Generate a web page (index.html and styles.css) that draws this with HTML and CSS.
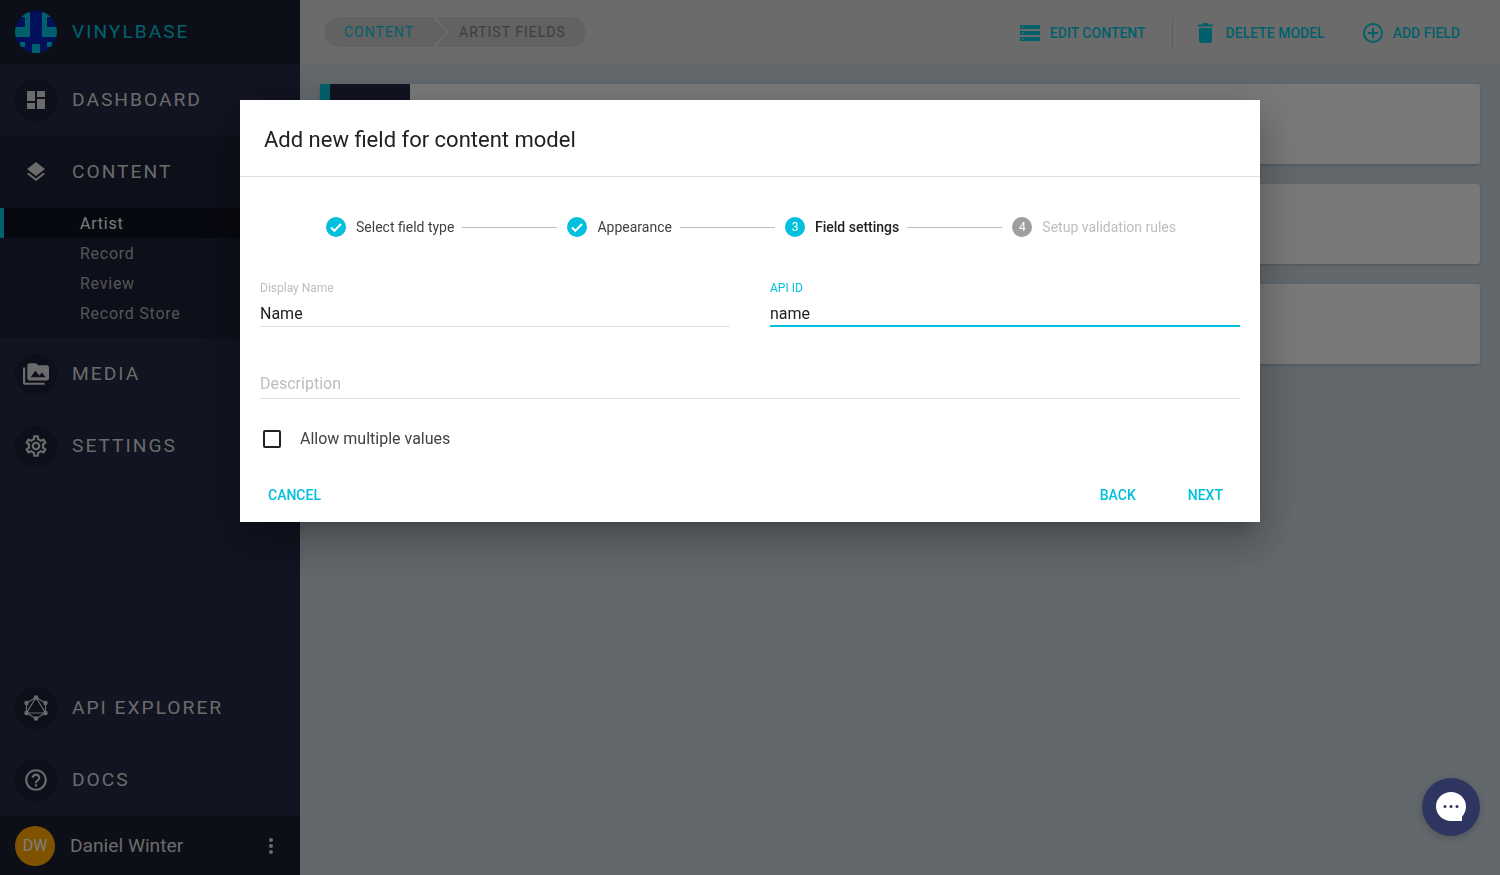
FILE: index.html
```html
<!DOCTYPE html>
<html lang="en">
<head>
    <meta charset="UTF-8">
    <title>Vinylbase - Artist fields</title>
    <link rel="stylesheet" href="styles.css">
</head>
<body>
    <div class="app">
        <!-- Sidebar -->
        <aside class="sidebar">
            <div class="brand">
                <svg class="logo" viewBox="0 0 42 42">
                    <clipPath id="logo-clip"><circle cx="21" cy="21" r="21"/></clipPath>
                    <g clip-path="url(#logo-clip)">
                        <rect width="42" height="42" fill="#0622b8"/>
                        <path fill="#00c3d9" fill-rule="evenodd" d="M0 0h15v26H0zM0 6v10h10V6zM27 0h15v26H27zM32 6v10h10V6zM17 33h8v9h-8zM5 31h5v5H5zM32 31h5v5h-5z"/>
                    </g>
                </svg>
                <span class="brand-name">VINYLBASE</span>
            </div>

            <a class="nav-item">
                <span class="nav-icon">
                    <svg viewBox="0 0 24 24" width="24" height="24"><path d="M3 13h8V3H3zm0 8h8v-6H3zm10 0h8V11h-8zm0-18v6h8V3z"/></svg>
                </span>
                DASHBOARD
            </a>

            <div class="nav-group">
                <a class="nav-item">
                    <span class="nav-icon">
                        <svg viewBox="0 0 24 24" width="24" height="24"><path d="M11.99 18.54l-7.37-5.73L3 14.07l9 7 9-7-1.63-1.27zM12 16l7.36-5.73L21 9l-9-7-9 7 1.63 1.27z"/></svg>
                    </span>
                    CONTENT
                </a>
                <ul class="sub-nav">
                    <li class="sub-item active">Artist</li>
                    <li class="sub-item">Record</li>
                    <li class="sub-item">Review</li>
                    <li class="sub-item">Record Store</li>
                </ul>
            </div>

            <a class="nav-item">
                <span class="nav-icon">
                    <svg viewBox="0 0 24 24" width="26" height="26"><path d="M2 6H0v14c0 1.1.9 2 2 2h18v-2H2zm20-2h-8l-2-2H6c-1.1 0-2 .9-2 2v12c0 1.1.9 2 2 2h16c1.1 0 2-.9 2-2V6c0-1.1-.9-2-2-2zM7 15l4.500-6 3.500 4.510 2.500-3.010L21 15z"/></svg>
                </span>
                MEDIA
            </a>
            <a class="nav-item">
                <span class="nav-icon">
                    <svg viewBox="0 0 24 24" width="26" height="26"><path d="M19.430 12.980c.04-.32.07-.64.07-.98s-.03-.66-.07-.98l2.110-1.650c.19-.15.24-.42.12-.64l-2-3.460c-.12-.22-.39-.3-.61-.22l-2.490 1c-.52-.4-1.080-.73-1.690-.98l-.38-2.650A.488.488 0 0 0 14 2h-4c-.25 0-.46.18-.49.42l-.38 2.650c-.61.25-1.170.59-1.690.98l-2.490-1c-.23-.09-.49 0-.61.22l-2 3.460c-.13.22-.07.49.12.64l2.110 1.650c-.04.32-.07.65-.07.98s.03.66.07.98l-2.110 1.650c-.19.15-.24.42-.12.64l2 3.460c.12.22.39.3.61.22l2.490-1c.52.4 1.080.73 1.690.98l.38 2.650c.03.24.24.42.49.42h4c.25 0 .46-.18.49-.42l.38-2.650c.61-.25 1.170-.59 1.690-.98l2.490 1c.23.09.49 0 .61-.22l2-3.460c.12-.22.07-.49-.12-.64zM17.450 11.270c.04.31.05.52.05.73s-.02.43-.05.73l-.14 1.130.89.7 1.080.84-.7 1.210-1.270-.51-1.040-.42-.9.68c-.43.32-.84.56-1.250.73l-1.060.43-.16 1.130-.2 1.350h-1.400l-.19-1.350-.16-1.130-1.060-.43c-.43-.18-.83-.41-1.230-.71l-.91-.7-1.060.43-1.270.51-.7-1.210 1.080-.84.89-.7-.14-1.130c-.03-.31-.05-.54-.05-.74s.02-.43.05-.73l.14-1.130-.89-.7-1.080-.84.7-1.210 1.270.51 1.040.42.9-.68c.43-.32.84-.56 1.250-.73l1.060-.43.16-1.130.2-1.350h1.390l.19 1.350.16 1.130 1.060.43c.43.18.83.41 1.230.71l.91.7 1.060-.43 1.270-.51.7 1.210-1.070.85-.89.7zM12 8c-2.210 0-4 1.790-4 4s1.790 4 4 4 4-1.790 4-4-1.790-4-4-4zm0 6c-1.100 0-2-.9-2-2s.9-2 2-2 2 .9 2 2-.9 2-2 2z"/></svg>
                </span>
                SETTINGS
            </a>

            <div class="nav-spacer"></div>

            <a class="nav-item">
                <span class="nav-icon">
                    <svg viewBox="0 0 26 26" width="26" height="26">
                        <path class="graph-line" d="M13 2.500 22.500 8v10L13 23.500 3.500 18V8zM13 2.500 22.500 18h-19z"/>
                        <circle cx="13" cy="2.500" r="2.200"/><circle cx="22.500" cy="8" r="2.200"/><circle cx="22.500" cy="18" r="2.200"/>
                        <circle cx="13" cy="23.500" r="2.200"/><circle cx="3.500" cy="18" r="2.200"/><circle cx="3.500" cy="8" r="2.200"/>
                    </svg>
                </span>
                API EXPLORER
            </a>
            <a class="nav-item">
                <span class="nav-icon">
                    <svg viewBox="0 0 24 24" width="26" height="26"><path d="M11 18h2v-2h-2zm1-16C6.480 2 2 6.480 2 12s4.480 10 10 10 10-4.480 10-10S17.520 2 12 2zm0 18c-4.410 0-8-3.590-8-8s3.590-8 8-8 8 3.590 8 8-3.590 8-8 8zm0-14c-2.210 0-4 1.790-4 4h2c0-1.100.9-2 2-2s2 .9 2 2c0 2-3 1.750-3 5h2c0-2.250 3-2.500 3-5 0-2.210-1.790-4-4-4z"/></svg>
                </span>
                DOCS
            </a>

            <div class="user-row">
                <span class="avatar">DW</span>
                <span class="user-name">Daniel Winter</span>
                <svg class="user-menu" viewBox="0 0 24 24" width="24" height="24"><path d="M12 8c1.100 0 2-.9 2-2s-.9-2-2-2-2 .9-2 2 .9 2 2 2zm0 2c-1.100 0-2 .9-2 2s.9 2 2 2 2-.9 2-2-.9-2-2-2zm0 6c-1.100 0-2 .9-2 2s.9 2 2 2 2-.9 2-2-.9-2-2-2z"/></svg>
            </div>
        </aside>

        <!-- Main content behind the dialog -->
        <main class="main">
            <header class="topbar">
                <div class="crumbs">
                    <span class="crumb crumb-first">CONTENT</span>
                    <svg class="crumb-sep" viewBox="0 0 20 30" width="20" height="30"><path d="M0 0l14 15L0 30" /></svg>
                    <span class="crumb">ARTIST FIELDS</span>
                </div>
                <div class="actions">
                    <a class="action">
                        <svg viewBox="0 0 20 16" width="20" height="16"><path d="M0 0h20v4H0zm0 6h20v4H0zm0 6h20v4H0zM2 1.300v1.400h1.400V1.300zm0 6v1.400h1.400V7.300zm0 6v1.400h1.400v-1.400z" fill-rule="evenodd"/></svg>
                        EDIT CONTENT
                    </a>
                    <span class="action-divider"></span>
                    <a class="action action-delete">
                        <svg viewBox="0 0 15 20" width="15" height="20"><path d="M1 5h13v13c0 1.100-.9 2-2 2H3c-1.100 0-2-.9-2-2zM15 1.500v2H0v-2h4.500l1-1.500h4l1 1.500z"/></svg>
                        DELETE MODEL
                    </a>
                    <a class="action action-add">
                        <svg viewBox="0 0 20 20" width="20" height="20"><circle class="add-ring" cx="10" cy="10" r="9"/><path d="M9 5h2v4h4v2h-4v4H9v-4H5V9h4z"/></svg>
                        ADD FIELD
                    </a>
                </div>
            </header>
            <section class="cards">
                <div class="card"><div class="card-tag"></div></div>
                <div class="card"><div class="card-tag"></div></div>
                <div class="card"><div class="card-tag"></div></div>
            </section>
        </main>
    </div>

    <!-- Dialog -->
    <div class="overlay">
        <div class="modal">
            <h2 class="modal-title">Add new field for content model</h2>

            <div class="stepper">
                <div class="step">
                    <svg class="step-check" viewBox="0 0 20 20" width="20" height="20"><circle cx="10" cy="10" r="10"/><path d="M5 10.500l3.400 3.300L15 7" /></svg>
                    Select field type
                </div>
                <span class="step-line"></span>
                <div class="step">
                    <svg class="step-check" viewBox="0 0 20 20" width="20" height="20"><circle cx="10" cy="10" r="10"/><path d="M5 10.500l3.400 3.300L15 7" /></svg>
                    Appearance
                </div>
                <span class="step-line"></span>
                <div class="step step-current">
                    <span class="step-num">3</span>
                    Field settings
                </div>
                <span class="step-line"></span>
                <div class="step step-todo">
                    <span class="step-num">4</span>
                    Setup validation rules
                </div>
            </div>

            <div class="form-row">
                <div class="field">
                    <span class="field-label">Display Name</span>
                    <span class="field-value">Name</span>
                </div>
                <div class="field field-focus">
                    <span class="field-label">API ID</span>
                    <span class="field-value">name</span>
                </div>
            </div>

            <div class="field field-empty">
                <span class="field-value">Description</span>
            </div>

            <label class="check-row">
                <span class="check-box"></span>
                Allow multiple values
            </label>

            <div class="modal-actions">
                <a class="btn">CANCEL</a>
                <span class="btn-gap"></span>
                <a class="btn">BACK</a>
                <a class="btn">NEXT</a>
            </div>
        </div>
    </div>

    <!-- Chat button -->
    <button class="chat-btn" type="button" aria-label="Chat">
        <svg viewBox="0 0 34 34" width="34" height="34">
            <path fill="#fff" d="M17 2c8.300 0 15 6.500 15 14.500 0 4-1.500 7.500-4 10.200V31h-11C8.700 31 2 24.500 2 16.500S8.700 2 17 2z"/>
            <circle cx="11" cy="16.500" r="1.500"/><circle cx="17" cy="16.500" r="1.500"/><circle cx="23" cy="16.500" r="1.500"/>
        </svg>
    </button>
</body>
</html>
```

FILE: styles.css
```css
* {
    box-sizing: border-box;
}

html,
body {
    height: 100%;
}

body {
    margin: 0;
    font-family: Roboto, "Liberation Sans", sans-serif;
    color: #222;
    overflow: hidden;
}

.app {
    display: flex;
    height: 875px;
}

/* Sidebar */
.sidebar {
    width: 300px;
    flex-shrink: 0;
    display: flex;
    flex-direction: column;
    background-color: #222842;
}

.brand {
    height: 64px;
    display: flex;
    align-items: center;
    padding-left: 15px;
    background-color: #191c30;
}

.logo {
    width: 42px;
    height: 42px;
    margin-right: 15px;
}

.brand-name {
    padding-bottom: 2px;
    font-size: 19.2px;
    letter-spacing: 2px;
    color: #00c3d9;
}

.nav-item {
    height: 72px;
    display: flex;
    align-items: center;
    padding: 0 0 2px 15px;
    font-size: 19.2px;
    letter-spacing: 2px;
    color: #d6d6d6;
}

.nav-icon {
    width: 42px;
    height: 42px;
    margin: 2px 15px 0 0;
    border-radius: 50%;
    display: flex;
    align-items: center;
    justify-content: center;
    background-color: #1b1f35;
}

.nav-icon svg {
    fill: #d6d6d6;
}

.graph-line {
    fill: none;
    stroke: #d6d6d6;
    stroke-width: 1.200;
}

.nav-group {
    background-color: #1b1f35;
}

.nav-group .nav-icon {
    background-color: transparent;
}

.sub-nav {
    list-style: none;
    margin: 0;
    padding: 0 0 10px;
    background-color: #1b1f35;
}

.sub-item {
    height: 30px;
    padding: 1px 0 0 80px;
    line-height: 29px;
    font-size: 16px;
    letter-spacing: 0.75px;
    color: #ababab;
}

.sub-item.active {
    color: #f2f2f2;
    background-color: #0f1220;
    box-shadow: inset 4px 0 0 #00c3d9;
}

.nav-spacer {
    flex: 1;
}

.user-row {
    height: 59px;
    display: flex;
    align-items: center;
    padding-left: 15px;
    background-color: #191c30;
}

.avatar {
    width: 40px;
    height: 40px;
    margin-right: 15px;
    border-radius: 50%;
    display: flex;
    align-items: center;
    justify-content: center;
    font-size: 16px;
    color: #fff;
    background-color: #fea400;
}

.user-name {
    flex: 1;
    font-size: 19.2px;
    color: #d6d6d6;
}

.user-menu {
    margin-right: 17px;
    fill: #d6d6d6;
}

/* Main */
.main {
    flex: 1;
    display: flex;
    flex-direction: column;
    background-color: #c4d0d8;
}

.topbar {
    height: 64px;
    display: flex;
    align-items: center;
    justify-content: space-between;
    padding: 0 40px 0 24px;
    background-color: #d6d6d6;
}

.crumbs {
    height: 30px;
    display: flex;
    align-items: center;
    padding: 0 20px;
    border-radius: 15px;
    background-color: #c4c4c4;
}

.crumb {
    font-size: 14px;
    letter-spacing: 1px;
    color: #7c7c7c;
}

.crumb-first {
    color: #00c3d9;
}

.crumb-sep {
    margin: 0 5px 0 20px;
}

.crumb-sep path {
    fill: none;
    stroke: #d6d6d6;
    stroke-width: 2;
}

.actions {
    display: flex;
    align-items: center;
    padding-top: 2px;
}

.action {
    display: flex;
    align-items: center;
    gap: 10px;
    font-size: 14px;
    font-weight: 500;
    color: #00c3d9;
}

.action svg {
    fill: #00c3d9;
}

.action-delete {
    gap: 13px;
    margin-right: 38px;
}

.add-ring {
    fill: none;
    stroke: #00c3d9;
    stroke-width: 2;
}

.action-divider {
    width: 1px;
    height: 32px;
    margin: 0 25px 0 26px;
    background-color: #bcbcbc;
}

.cards {
    display: flex;
    flex-direction: column;
    gap: 20px;
    padding: 20px;
}

.card {
    height: 80px;
    display: flex;
    border-radius: 3px;
    overflow: hidden;
    background-color: #f2f2f2;
    box-shadow: 0 1px 3px rgba(0, 0, 0, 0.2);
}

.card-tag {
    width: 90px;
    background-color: #222842;
    box-shadow: inset 10px 0 0 #00c3d9;
}

/* Dialog */
.overlay {
    position: fixed;
    inset: 0;
    display: flex;
    justify-content: center;
    align-items: flex-start;
    padding-top: 100px;
    background-color: rgba(0, 0, 0, 0.5);
}

.modal {
    width: 1020px;
    height: 422px;
    padding: 0 20px;
    background-color: #fff;
    box-shadow: 0 11px 15px -7px rgba(0, 0, 0, 0.2), 0 24px 38px 3px rgba(0, 0, 0, 0.14), 0 9px 46px 8px rgba(0, 0, 0, 0.12);
}

.modal-title {
    height: 77px;
    margin: 0 -20px;
    padding: 27px 24px 0;
    font-size: 22px;
    line-height: 26px;
    font-weight: 400;
    color: #212121;
    border-bottom: 1px solid #e0e0e0;
}

.stepper {
    display: flex;
    align-items: center;
    height: 20px;
    margin: 40px 64px 0 66px;
}

.step {
    display: flex;
    align-items: center;
    gap: 10px;
    font-size: 14px;
    color: #424242;
    white-space: nowrap;
}

.step-check circle {
    fill: #00c0de;
}

.step-check path {
    fill: none;
    stroke: #fff;
    stroke-width: 2;
}

.step-num {
    width: 20px;
    height: 20px;
    border-radius: 50%;
    display: flex;
    align-items: center;
    justify-content: center;
    font-size: 12px;
    color: #fff;
    background-color: #00c0de;
}

.step-current {
    font-weight: 500;
    color: #212121;
}

.step-current .step-num {
    font-weight: 400;
}

.step-todo {
    color: #bdbdbd;
}

.step-todo .step-num {
    background-color: #9e9e9e;
}

.step-line {
    flex: 1;
    height: 1px;
    margin: 0 10px 0 8px;
    background-color: #bdbdbd;
}

.form-row {
    display: flex;
    gap: 40px;
    margin-top: 44px;
}

.field {
    flex: 1;
    display: block;
    border-bottom: 1px solid #e0e0e0;
}

.field-label {
    display: block;
    height: 15px;
    font-size: 12px;
    line-height: 15px;
    color: #bdbdbd;
}

.field-value {
    display: block;
    height: 24px;
    margin-top: 6px;
    font-size: 16px;
    line-height: 24px;
    color: #212121;
}

.field-focus {
    border-bottom: 2px solid #00c0de;
}

.field-focus .field-label {
    color: #00c0de;
}

.field-focus .field-value {
    height: 23px;
}

.field-empty {
    margin-top: 45px;
    padding-bottom: 2px;
}

.field-empty .field-value {
    margin-top: 0;
    color: #bdbdbd;
}

.check-row {
    display: flex;
    align-items: center;
    margin-top: 30px;
    font-size: 16px;
    line-height: 20px;
    color: #424242;
}

.check-box {
    width: 18px;
    height: 18px;
    margin: 0 19px 0 3px;
    border: 2px solid #212121;
    border-radius: 2px;
}

.modal-actions {
    display: flex;
    align-items: center;
    margin: 36px -4px 0 8px;
}

.btn {
    font-size: 14px;
    font-weight: 500;
    line-height: 20px;
    color: #00c0de;
}

.btn-gap {
    flex: 1;
}

.btn + .btn {
    margin-left: 52px;
    margin-right: 21px;
}

/* Chat */
.chat-btn {
    position: fixed;
    left: 1422px;
    top: 778px;
    width: 58px;
    height: 58px;
    padding: 0;
    border: none;
    border-radius: 50%;
    display: flex;
    align-items: center;
    justify-content: center;
    background-color: #2e3561;
    box-shadow: 0 2px 8px rgba(0, 0, 0, 0.2);
}

.chat-btn circle {
    fill: #2e3561;
}
```
